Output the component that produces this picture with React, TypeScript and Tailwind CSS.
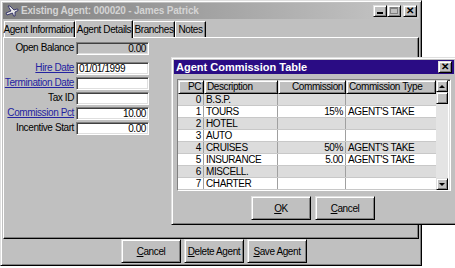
import React from "react";

const raised =
  "border border-t-[#dfdfdf] border-l-[#dfdfdf] border-r-black border-b-black shadow-[inset_1px_1px_0_#ffffff,inset_-1px_-1px_0_#808080]";
const sunken =
  "border border-t-[#808080] border-l-[#808080] border-r-white border-b-white shadow-[inset_1px_1px_0_#404040,inset_-1px_-1px_0_#dfdfdf]";

const tabs = [
  { name: "Agent Information", w: "w-[71px]" },
  { name: "Agent Details", w: "w-[58px]", active: true },
  { name: "Branches", w: "w-[42px]" },
  { name: "Notes", w: "w-[31px]" },
];

const fields: { label: string; value: string; link?: boolean; right?: boolean; gray?: boolean; mt: string }[] = [
  { label: "Open Balance", value: "0.00", right: true, gray: true, mt: "mt-[3px]" },
  { label: "Hire Date", value: "01/01/1999", link: true, mt: "mt-[7px]" },
  { label: "Termination Date", value: "", link: true, mt: "mt-[2px]" },
  { label: "Tax ID", value: "", mt: "mt-[2px]" },
  { label: "Commission Pct", value: "10.00", link: true, right: true, mt: "mt-[2px]" },
  { label: "Incentive Start", value: "0.00", right: true, mt: "mt-[2px]" },
];

const rows = [
  { pc: "0", desc: "B.S.P.", comm: "", type: "" },
  { pc: "1", desc: "TOURS", comm: "15%", type: "AGENT'S TAKE" },
  { pc: "2", desc: "HOTEL", comm: "", type: "" },
  { pc: "3", desc: "AUTO", comm: "", type: "" },
  { pc: "4", desc: "CRUISES", comm: "50%", type: "AGENT'S TAKE" },
  { pc: "5", desc: "INSURANCE", comm: "5.00", type: "AGENT'S TAKE" },
  { pc: "6", desc: "MISCELL.", comm: "", type: "" },
  { pc: "7", desc: "CHARTER", comm: "", type: "" },
];

function Btn({ children, w = "w-[60px]" }: { children: React.ReactNode; w?: string }) {
  return (
    <div className={`${raised} ${w} h-[24px] flex items-center justify-center bg-[#c0c0c0] text-black whitespace-nowrap`}>
      {children}
    </div>
  );
}

function CaptionBtn({ children }: { children: React.ReactNode }) {
  return (
    <div className={`${raised} w-[14px] h-[12px] bg-[#c0c0c0] flex items-center justify-center text-black`}>
      {children}
    </div>
  );
}

export default function App() {
  return (
    <div
      className="relative w-[455px] h-[268px] bg-white overflow-hidden text-black whitespace-nowrap text-[10px] tracking-[-0.4px]"
      style={{ fontFamily: '"Liberation Sans", Arial, sans-serif' }}
    >
      {/* Main window */}
      <div className={`${raised} w-[422px] h-[266px] bg-[#c0c0c0] flex flex-col p-[2px]`}>
        {/* Title bar */}
        <div className="h-[16px] flex items-center bg-gradient-to-r from-[#7f7f7f] to-[#c8c8c8] pl-[2px] pr-[2px]">
          <svg width="14" height="14" viewBox="0 0 14 14">
            <path d="M1 9 L6 7 L3 2 L5 2 L9 6 L12 5 Q13.5 5 13 6.5 L10 8 L10 12 L8.5 12 L7.5 9 L2 11 Z" fill="#e8e8e8" stroke="#202060" strokeWidth="0.8" />
          </svg>
          <span className="ml-[2px] text-[10px] font-bold text-[#d4d4d4] tracking-[-0.2px]">
            Existing Agent: 000020 - James Patrick
          </span>
          <div className="ml-auto flex">
            <CaptionBtn>
              <div className="w-[6px] h-[2px] bg-black mt-[5px]" />
            </CaptionBtn>
            <CaptionBtn>
              <div className="w-[8px] h-[7px] border border-[#808080] border-t-2" />
            </CaptionBtn>
            <div className="w-[2px]" />
            <CaptionBtn>
              <span className="text-[10px] font-bold leading-none">✕</span>
            </CaptionBtn>
          </div>
        </div>

        {/* Tabs */}
        <div className="h-[17px] flex items-end pl-[1px] mt-[1px]">
          {tabs.map((t) =>
            t.active ? (
              <div
                key={t.name}
                className={`${t.w} h-[18px] -mb-[1px] relative z-10 bg-[#c0c0c0] border-t border-l border-r border-t-white border-l-white border-r-black shadow-[inset_-1px_0_0_#808080] flex items-center justify-center`}
              >
                {t.name}
              </div>
            ) : (
              <div
                key={t.name}
                className={`${t.w} h-[16px] bg-[#c0c0c0] border-t border-l border-r border-t-white border-l-white border-r-black shadow-[inset_-1px_0_0_#808080] flex items-center justify-center`}
              >
                {t.name}
              </div>
            )
          )}
        </div>

        {/* Panel */}
        <div className="h-[205px] border border-t-white border-l-white border-r-black border-b-black shadow-[inset_-1px_-1px_0_#808080] pt-[1px]">
          {fields.map((f) => (
            <div key={f.label} className={`${f.mt} flex items-center h-[13px]`}>
              <div className={`w-[72px] flex justify-end pr-[2px] leading-none ${f.link ? "text-[#2323a0] underline" : ""}`}>
                {f.label}
              </div>
              <div
                className={`${sunken} w-[73px] h-[13px] ${f.gray ? "bg-[#c0c0c0]" : "bg-white"} leading-[11px] px-[2px] ${f.right ? "text-right" : "text-left"}`}
              >
                {f.value}
              </div>
            </div>
          ))}
        </div>

        {/* Bottom buttons */}
        <div className="flex-1 flex items-center pl-[118px] gap-[3px]">
          <Btn>
            <span>
              <u>C</u>ancel
            </span>
          </Btn>
          <Btn>
            <span>
              <u>D</u>elete Agent
            </span>
          </Btn>
          <Btn>
            <span>
              <u>S</u>ave Agent
            </span>
          </Btn>
        </div>
      </div>

      {/* Agent Commission Table dialog */}
      <div className={`${raised} absolute left-[171px] top-[57px] w-[286px] h-[168px] bg-[#c0c0c0] p-[2px] flex flex-col`}>
        <div className="h-[14px] bg-[#2a0c84] flex items-center pl-[2px] pr-[2px]">
          <span className="text-[11px] font-bold text-white tracking-[0px]">Agent Commission Table</span>
          <div className="ml-auto">
            <CaptionBtn>
              <span className="text-[10px] font-bold leading-none">✕</span>
            </CaptionBtn>
          </div>
        </div>

        {/* Grid */}
        <div className={`${sunken} ml-[3px] mt-[5px] w-[274px] h-[112px] bg-white flex`}>
          <div className="flex flex-col w-[258px]">
            <div className="flex h-[14px]">
              <div className={`${raised} w-[26px] bg-[#c0c0c0] text-right pr-[2px] leading-[12px]`}>PC</div>
              <div className={`${raised} w-[74px] bg-[#c0c0c0] pl-[2px] leading-[12px]`}>Description</div>
              <div className={`${raised} w-[68px] bg-[#c0c0c0] text-right pr-[2px] leading-[12px]`}>Commission</div>
              <div className={`${raised} w-[90px] bg-[#c0c0c0] pl-[2px] leading-[12px]`}>Commission Type</div>
            </div>
            {rows.map((r, i) => (
              <div
                key={r.pc}
                className={`flex h-[12px] leading-[11px] border-b border-[#c8c8c8] ${i % 2 === 0 ? "bg-[#dcdcdc]" : "bg-white"}`}
              >
                <div className="w-[26px] text-right pr-[2px] border-r border-[#a0a0a0]">{r.pc}</div>
                <div className="w-[74px] pl-[2px] border-r border-[#a0a0a0]">{r.desc}</div>
                <div className="w-[68px] text-right pr-[2px] border-r border-[#a0a0a0]">{r.comm}</div>
                <div className="w-[90px] pl-[2px]">{r.type}</div>
              </div>
            ))}
          </div>
          {/* Scrollbar */}
          <div className="w-[12px] bg-[#e4e4e4] flex flex-col">
            <div className={`${raised} h-[12px] bg-[#c0c0c0] flex items-center justify-center`}>
              <div className="w-0 h-0 border-l-[3px] border-r-[3px] border-b-[3px] border-l-transparent border-r-transparent border-b-black" />
            </div>
            <div className={`${raised} h-[12px] bg-[#c0c0c0]`} />
            <div className="flex-1" />
            <div className={`${raised} h-[12px] bg-[#c0c0c0] flex items-center justify-center`}>
              <div className="w-0 h-0 border-l-[3px] border-r-[3px] border-t-[3px] border-l-transparent border-r-transparent border-t-black" />
            </div>
          </div>
        </div>

        <div className="flex pl-[77px] gap-[4px] mt-[5px]">
          <Btn>
            <span>
              <u>O</u>K
            </span>
          </Btn>
          <Btn>
            <span>
              <u>C</u>ancel
            </span>
          </Btn>
        </div>
      </div>
    </div>
  );
}
